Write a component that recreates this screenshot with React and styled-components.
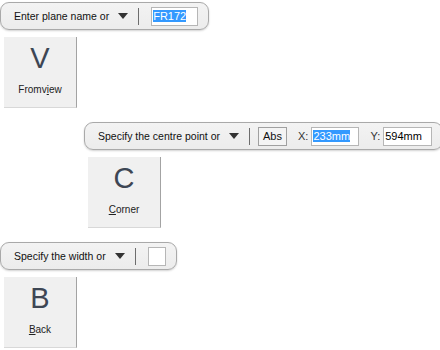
import React from "react";
import styled, { createGlobalStyle } from "styled-components";

const Global = createGlobalStyle`
  html, body {
    margin: 0;
    padding: 0;
    background: #ffffff;
    font-family: "Liberation Sans", Arial, sans-serif;
  }
`;

function Prompt(props) {
  return (
    <Toolbar>
      <Label>{props.label}</Label>
      <Caret viewBox="0 0 10 6">
        <path d="M0 0 L10 0 L5 6 Z" fill="#333" />
      </Caret>
      <Sep />
      {props.children}
    </Toolbar>
  );
}

function Tool(props) {
  const i = props.hot;
  const t = props.text;
  return (
    <ToolButton>
      <Big>{props.letter}</Big>
      <Caption>
        {t.slice(0, i)}
        <u>{t[i]}</u>
        {t.slice(i + 1)}
      </Caption>
    </ToolButton>
  );
}

export default function App() {
  return (
    <Page>
      <Global />
      <Group $indent={0}>
        <Prompt label="Enter plane name or">
          <Field $w={47} $ml={12}>
            <Sel>FR172</Sel>
          </Field>
        </Prompt>
        <Tool letter="V" text="Fromview" hot={5} />
      </Group>

      <Group $indent={84}>
        <Prompt label="Specify the centre point or">
          <AbsButton>Abs</AbsButton>
          <Axis>X:</Axis>
          <Field $w={48} $ml={3}>
            <Sel>233mm</Sel>
          </Field>
          <Axis>Y:</Axis>
          <Field $w={49} $ml={3}>
            594mm
          </Field>
        </Prompt>
        <Tool letter="C" text="Corner" hot={0} />
      </Group>

      <Group $indent={0}>
        <Prompt label="Specify the width or">
          <Field $w={18} $ml={12} />
        </Prompt>
        <Tool letter="B" text="Back" hot={0} />
      </Group>
    </Page>
  );
}

const Page = styled.div`
  display: flex;
  flex-direction: column;
  align-items: flex-start;
  gap: 14px;
  padding-top: 2px;
`;

const Group = styled.div`
  display: flex;
  flex-direction: column;
  align-items: flex-start;
  gap: 7px;
  margin-left: ${(p) => p.$indent}px;
`;

const Toolbar = styled.div`
  display: flex;
  align-items: center;
  box-sizing: border-box;
  height: 28px;
  padding: 0 10px 0 13px;
  background: linear-gradient(#f3f3f3, #ececec);
  border: 1px solid #a9a9a9;
  border-radius: 9px;
  box-shadow: 0 1px 2px rgba(0, 0, 0, 0.18);
`;

const Label = styled.span`
  font-size: 10.5px;
  color: #111;
  white-space: nowrap;
`;

const Caret = styled.svg`
  width: 10px;
  height: 6px;
  margin-left: 9px;
`;

const Sep = styled.div`
  width: 1px;
  height: 17px;
  background: #6d6d6d;
  margin-left: 10px;
`;

const Field = styled.div`
  box-sizing: border-box;
  width: ${(p) => p.$w}px;
  height: 19px;
  margin-left: ${(p) => p.$ml}px;
  padding: 0 1px;
  background: #fff;
  border: 1px solid #b6b6b6;
  font-size: 11px;
  line-height: 17px;
  color: #000;
  white-space: nowrap;
`;

const Sel = styled.span`
  background: #3399ff;
  color: #fff;
`;

const AbsButton = styled.div`
  box-sizing: border-box;
  width: 29px;
  height: 19px;
  margin-left: 8px;
  border: 1px solid #a0a0a0;
  background: #f4f4f4;
  font-size: 11px;
  line-height: 17px;
  text-align: center;
  color: #111;
`;

const Axis = styled.span`
  font-size: 11px;
  color: #333;
  margin-left: 11px;
`;

const ToolButton = styled.div`
  box-sizing: border-box;
  width: 73px;
  height: 71px;
  margin-left: 4px;
  display: flex;
  flex-direction: column;
  align-items: center;
  background: #f0f0f0;
  border-right: 1px solid #a3a3a3;
  border-bottom: 1px solid #d8d8d8;
`;

const Big = styled.div`
  font-size: 29px;
  line-height: 29px;
  margin-top: 7px;
  color: #3d4654;
`;

const Caption = styled.div`
  font-size: 10px;
  color: #222;
  margin-top: 11px;
`;
